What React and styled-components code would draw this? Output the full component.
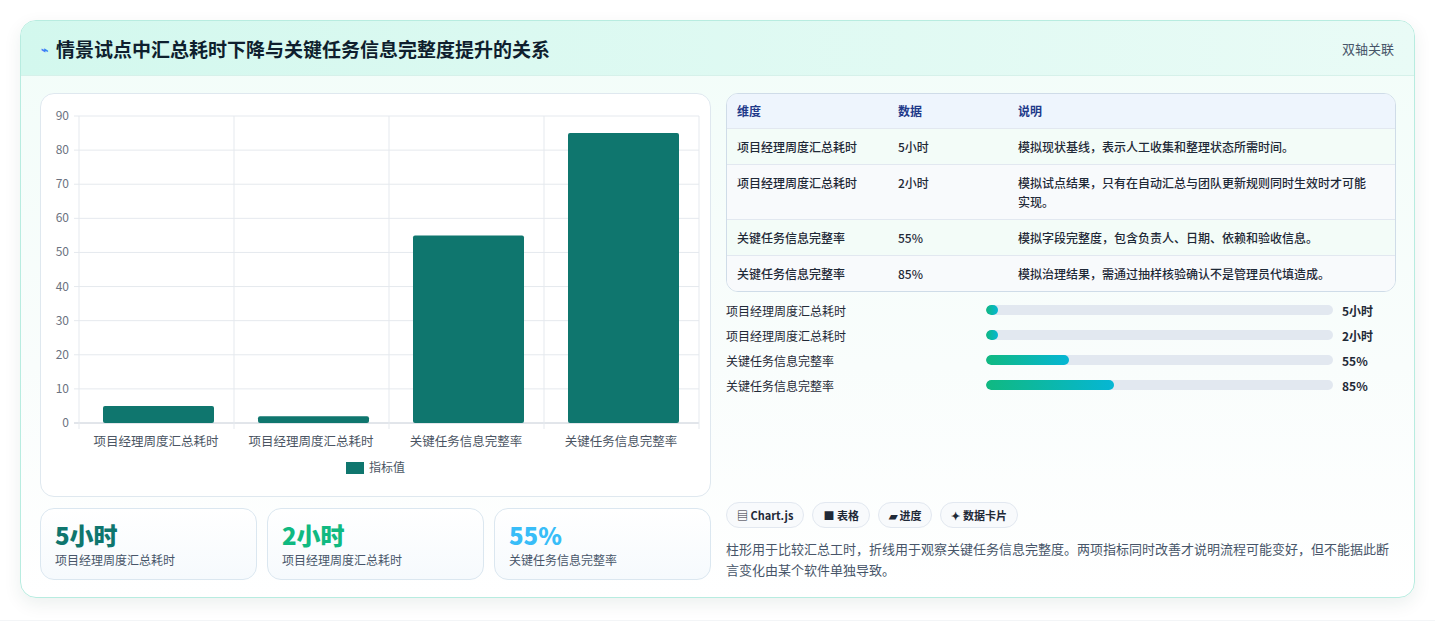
import styled, { createGlobalStyle } from 'styled-components';

const Global = createGlobalStyle`
  body { margin: 0; background: #f3f5f7; font-family: "Noto Sans CJK SC", "Noto Sans", sans-serif; }
`;

const rows = [
  { name: '项目经理周度汇总耗时', value: 5, label: '5小时', note: '模拟现状基线，表示人工收集和整理状态所需时间。' },
  { name: '项目经理周度汇总耗时', value: 2, label: '2小时', note: '模拟试点结果，只有在自动汇总与团队更新规则同时生效时才可能实现。' },
  { name: '关键任务信息完整率', value: 55, label: '55%', note: '模拟字段完整度，包含负责人、日期、依赖和验收信息。' },
  { name: '关键任务信息完整率', value: 85, label: '85%', note: '模拟治理结果，需通过抽样核验确认不是管理员代填造成。' },
];

const Page = styled.div`
  padding: 20px 20px 22px;
  background: #fff;
`;
const Card = styled.div`
  border: 1px solid #b8ece0;
  border-radius: 16px;
  background: linear-gradient(180deg, #f2fdf9 0%, #f9fdfc 60%, #ffffff 100%);
  box-shadow: 0 6px 18px rgba(15, 60, 50, 0.08);
  overflow: hidden;
`;
const Header = styled.div`
  height: 54px;
  display: flex;
  align-items: center;
  justify-content: space-between;
  padding: 0 20px;
  background: linear-gradient(90deg, #d3f8ee, #e9fbf6);
  border-bottom: 1px solid #d6f1ea;
`;
const Title = styled.h1`
  margin: 0;
  font-size: 19px;
  font-weight: 700;
  color: #0f1f2e;
  display: flex;
  align-items: center;
  gap: 8px;
`;
const Badge = styled.span`
  font-size: 13px;
  color: #475569;
`;
const Body = styled.div`
  display: grid;
  grid-template-columns: 671px 670px;
  gap: 15px;
  padding: 17px 19px 17px 19px;
`;
const Left = styled.div`
  display: flex;
  flex-direction: column;
  gap: 11px;
`;
const Panel = styled.div`
  height: 402px;
  background: #fff;
  border: 1px solid #dfe8ef;
  border-radius: 14px;
`;
const Stats = styled.div`
  display: grid;
  grid-template-columns: repeat(3, 1fr);
  gap: 10px;
`;
const Stat = styled.div`
  height: 72px;
  box-sizing: border-box;
  border: 1px solid #dbe7f0;
  border-radius: 14px;
  background: linear-gradient(180deg, #ffffff, #f6fafd);
  padding: 10px 14px;
`;
const StatValue = styled.div`
  font-size: 24px;
  font-weight: 800;
  line-height: 32px;
  color: ${(p) => p.color};
`;
const StatLabel = styled.div`
  font-size: 12px;
  color: #475569;
`;
const Right = styled.div`
  display: flex;
  flex-direction: column;
  justify-content: space-between;
`;
const Table = styled.div`
  border: 1px solid #cfdce8;
  border-radius: 12px;
  overflow: hidden;
  background: #fff;
  font-size: 12px;
  color: #1f2937;
`;
const Row = styled.div`
  display: grid;
  grid-template-columns: 161px 120px 1fr;
  padding: 8px 10px;
  min-height: 34px;
  box-sizing: border-box;
  align-items: start;
  line-height: 19px;
  background: ${(p) => (p.head ? '#eef5fd' : p.odd ? '#f3fcf8' : '#f8fafc')};
  color: ${(p) => (p.head ? '#1e3a8a' : '#1f2937')};
  font-weight: ${(p) => (p.head ? 600 : 500)};
  border-top: ${(p) => (p.head ? 'none' : '1px solid #e2e8f0')};
  padding-top: ${(p) => (p.head ? '7px' : '8px')};
  span { padding-right: 10px; }
`;
const Bars = styled.div`
  display: flex;
  flex-direction: column;
  gap: 7px;
  margin-top: 9px;
`;
const BarRow = styled.div`
  display: grid;
  grid-template-columns: 251px 347px 1fr;
  gap: 9px;
  align-items: center;
  font-size: 12px;
  color: #1f2937;
  height: 18px;
  b { font-weight: 700; }
`;
const Track = styled.div`
  height: 10px;
  border-radius: 5px;
  background: #e2e8f0;
  overflow: hidden;
`;
const Fill = styled.div`
  height: 100%;
  border-radius: 5px;
  background: linear-gradient(90deg, #10b981, #06b6d4);
`;
const Tags = styled.div`
  display: flex;
  gap: 8px;
  margin-bottom: 10px;
`;
const Tag = styled.span`
  font-size: 11px;
  font-weight: 600;
  color: #1f2937;
  padding: 4px 10px;
  border: 1px solid #e2e8f0;
  border-radius: 14px;
  background: #f8fafc;
`;
const Note = styled.p`
  margin: 0;
  font-size: 13px;
  line-height: 21px;
  color: #475569;
`;

const Chart = () => {
  const x0 = 38, y0 = 329, top = 22, w = 620;
  const sc = (y0 - top) / 90;
  const ticks = [0, 10, 20, 30, 40, 50, 60, 70, 80, 90];
  return (
    <svg width="671" height="402" style={{ display: 'block' }} fontFamily="Noto Sans CJK SC, sans-serif">
      {ticks.map((t) => (
        <g key={t}>
          <line x1={x0 - 5} x2={x0 + w} y1={y0 - t * sc} y2={y0 - t * sc} stroke={t ? '#e5e9ee' : '#c5ccd6'} />
          <text x={x0 - 10} y={y0 - t * sc + 4} textAnchor="end" fontSize="12" fill="#6b7280">{t}</text>
        </g>
      ))}
      {[0, 1, 2, 3, 4].map((i) => (
        <line key={i} x1={x0 + i * 155} x2={x0 + i * 155} y1={top} y2={y0 + 6} stroke="#e5e9ee" />
      ))}
      {rows.map((r, i) => (
        <g key={i}>
          <rect x={x0 + i * 155 + 24} y={y0 - r.value * sc} width="111" height={r.value * sc} rx="2" fill="#0f766e" />
          <text x={x0 + i * 155 + 77} y={y0 + 23} textAnchor="middle" fontSize="12.5" fill="#4b5563">{r.name}</text>
        </g>
      ))}
      <rect x="305" y="368" width="18" height="12" fill="#0f766e" />
      <text x="328" y="378" fontSize="12" fill="#4b5563">指标值</text>
    </svg>
  );
};

export default function App() {
  return (
    <Page>
      <Global />
      <Card>
        <Header>
          <Title><span style={{ color: '#3b82f6', fontSize: 12 }}>⌁</span>情景试点中汇总耗时下降与关键任务信息完整度提升的关系</Title>
          <Badge>双轴关联</Badge>
        </Header>
        <Body>
          <Left>
            <Panel><Chart /></Panel>
            <Stats>
              <Stat><StatValue color="#0f766e">5小时</StatValue><StatLabel>项目经理周度汇总耗时</StatLabel></Stat>
              <Stat><StatValue color="#10b981">2小时</StatValue><StatLabel>项目经理周度汇总耗时</StatLabel></Stat>
              <Stat><StatValue color="#38bdf8">55%</StatValue><StatLabel>关键任务信息完整率</StatLabel></Stat>
            </Stats>
          </Left>
          <Right>
            <div>
              <Table>
                <Row head><span>维度</span><span>数据</span><span>说明</span></Row>
                {rows.map((r, i) => (
                  <Row key={i} odd={i % 2 === 0}><span>{r.name}</span><span>{r.label}</span><span>{r.note}</span></Row>
                ))}
              </Table>
              <Bars>
                {rows.map((r, i) => (
                  <BarRow key={i}>
                    <span>{r.name}</span>
                    <Track><Fill style={{ width: Math.max(12, (r.value / 230) * 347) }} /></Track>
                    <b>{r.label}</b>
                  </BarRow>
                ))}
              </Bars>
            </div>
            <div>
              <Tags>
                <Tag>▤ Chart.js</Tag>
                <Tag>■ 表格</Tag>
                <Tag>▰ 进度</Tag>
                <Tag>✦ 数据卡片</Tag>
              </Tags>
              <Note>柱形用于比较汇总工时，折线用于观察关键任务信息完整度。两项指标同时改善才说明流程可能变好，但不能据此断言变化由某个软件单独导致。</Note>
            </div>
          </Right>
        </Body>
      </Card>
    </Page>
  );
}
